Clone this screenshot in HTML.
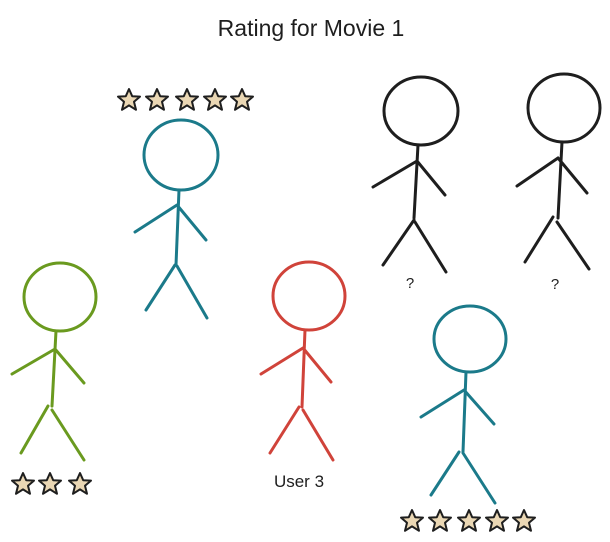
<!DOCTYPE html>
<html><head><meta charset="utf-8"><style>
html,body{margin:0;padding:0;background:#fff;}
svg{display:block}
text{font-family:"Liberation Sans",sans-serif;fill:#1e1e1e}
</style></head><body>
<svg width="610" height="542" viewBox="0 0 610 542" xmlns="http://www.w3.org/2000/svg">
<defs>
<path id="st" d="M0,-11 L3.2,-3.8 L11,-3.4 L5,1.8 L7,9.8 L0,5.4 L-7,9.8 L-5,1.8 L-11,-3.4 L-3.2,-3.8 Z" fill="#ead7b4" stroke="#1e1e1e" stroke-width="2" stroke-linejoin="round"/>
</defs>
<text x="311" y="36" font-size="23" text-anchor="middle">Rating for Movie 1</text>

<!-- top stars -->
<use href="#st" x="129" y="100"/><use href="#st" x="157" y="100"/><use href="#st" x="187" y="100"/><use href="#st" x="215" y="100"/><use href="#st" x="242" y="100"/>

<g fill="none" stroke-linecap="round" stroke-width="3">
<!-- teal 1 -->
<g stroke="#1b7a8a">
<ellipse cx="181" cy="155" rx="37" ry="35"/>
<path d="M179,190 L176,265 M177,205 L135,232 M177,205 L206,240 M175,265 L146,310 M177,266 L207,318"/>
</g>
<!-- black 1 -->
<g stroke="#1e1e1e">
<ellipse cx="421" cy="111" rx="37" ry="34"/>
<path d="M418,145 L414,218 M417,161 L373,187 M417,161 L445,195 M414,220 L383,265 M415,222 L446,272"/>
<ellipse cx="564" cy="108" rx="36" ry="34"/>
<path d="M562,142 L558,218 M558,158 L517,186 M558,158 L587,193 M553,217 L525,262 M557,222 L589,269"/>
</g>
<!-- green -->
<g stroke="#6a9a1f">
<ellipse cx="60" cy="297" rx="36" ry="34"/>
<path d="M56,331 L52,406 M55,349 L12,374 M55,349 L84,383 M48,406 L21,453 M52,410 L84,460"/>
</g>
<!-- red -->
<g stroke="#d0433a">
<ellipse cx="309" cy="296" rx="36" ry="34"/>
<path d="M305,330 L302,407 M303,348 L261,374 M303,348 L331,382 M299,407 L270,453 M303,410 L333,460"/>
</g>
<!-- teal 2 -->
<g stroke="#1b7a8a">
<ellipse cx="470" cy="339" rx="36" ry="33"/>
<path d="M466,372 L463,452 M464,390 L421,417 M464,390 L494,424 M459,452 L431,495 M463,453 L495,503"/>
</g>
</g>

<text x="410" y="288" font-size="15" text-anchor="middle">?</text>
<text x="555" y="289" font-size="15" text-anchor="middle">?</text>
<text x="299" y="487" font-size="17" text-anchor="middle">User 3</text>

<use href="#st" x="23" y="484"/><use href="#st" x="50" y="484"/><use href="#st" x="80" y="484"/>
<use href="#st" x="412" y="521"/><use href="#st" x="440" y="521"/><use href="#st" x="469" y="521"/><use href="#st" x="497" y="521"/><use href="#st" x="524" y="521"/>
</svg>
</body></html>
